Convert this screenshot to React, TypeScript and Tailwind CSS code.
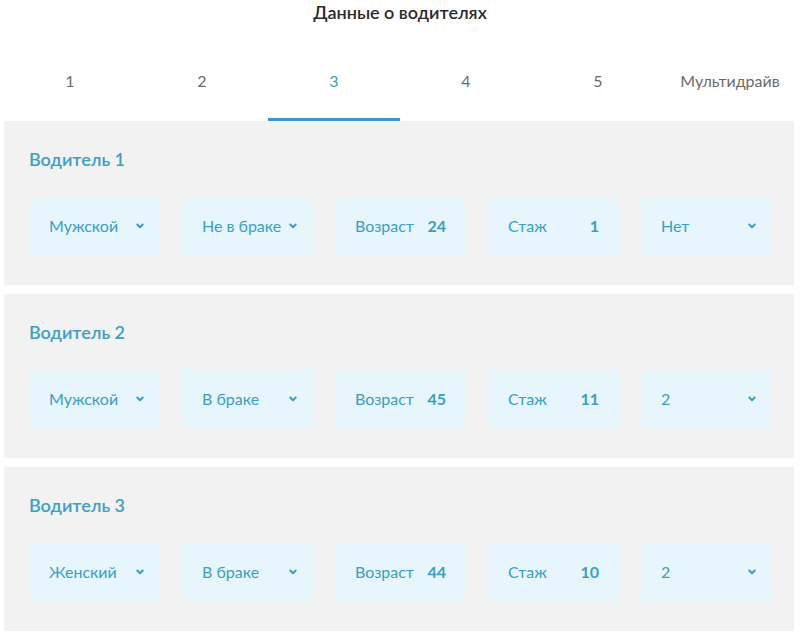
const tabs = ["1", "2", "3", "4", "5", "Мультидрайв"]

const drivers = [
  { id: 1, sex: "Мужской", married: "Не в браке", age: 24, exp: 1, kids: "Нет" },
  { id: 2, sex: "Мужской", married: "В браке", age: 45, exp: 11, kids: "2" },
  { id: 3, sex: "Женский", married: "В браке", age: 44, exp: 10, kids: "2" },
]

function Chevron() {
  return (
    <svg width="8" height="6" viewBox="0 0 8 6" className="shrink-0">
      <path d="M1.3 1.5 L4 4.2 L6.7 1.5" fill="none" stroke="#3a9fc4" strokeWidth="2" strokeLinecap="round" strokeLinejoin="round" />
    </svg>
  )
}

function Select({ label }: { label: string }) {
  return (
    <div className="w-[131px] h-[58px] bg-[#e7f5fc] flex items-center justify-between gap-[4px] pl-[20px] pr-[16px] whitespace-nowrap">
      <span>{label}</span>
      <Chevron />
    </div>
  )
}

function Field({ label, value }: { label: string; value: number }) {
  return (
    <div className="w-[131px] h-[58px] bg-[#e7f5fc] flex items-center justify-between pl-[20px] pr-[20px] whitespace-nowrap">
      <span>{label}</span>
      <span className="font-bold">{value}</span>
    </div>
  )
}

export default function App() {
  return (
    <div className="w-[800px] h-[635px] bg-white overflow-hidden font-['Lato','Liberation_Sans',sans-serif]">
      <div className="h-[24px] flex items-center justify-center text-[18px] font-semibold text-[#2b2b2b]">
        Данные о водителях
      </div>
      <div className="mt-[20px] mx-[4px] flex">
        {tabs.map((t, i) => (
          <div
            key={t}
            className={`w-[132px] h-[77px] flex items-center justify-center text-[16px] border-b-[3px] ${
              i === 2 ? "text-[#3aa0c8] border-[#3c97c4]" : "text-[#6b6b6b] border-transparent"
            }`}
          >
            {t}
          </div>
        ))}
      </div>
      <div className="ml-[4px] mr-[6px] flex flex-col gap-[9px]">
        {drivers.map((d) => (
          <div key={d.id} className="h-[164px] bg-[#f2f2f2] pl-[25px] pt-[28px] flex flex-col">
            <h2 className="text-[18px] leading-[20px] font-semibold text-[#3aa0c8]">Водитель {d.id}</h2>
            <div className="mt-[28px] flex gap-[22px] text-[16px] text-[#3a9fc4]">
              <Select label={d.sex} />
              <Select label={d.married} />
              <Field label="Возраст" value={d.age} />
              <Field label="Стаж" value={d.exp} />
              <Select label={d.kids} />
            </div>
          </div>
        ))}
      </div>
    </div>
  )
}
